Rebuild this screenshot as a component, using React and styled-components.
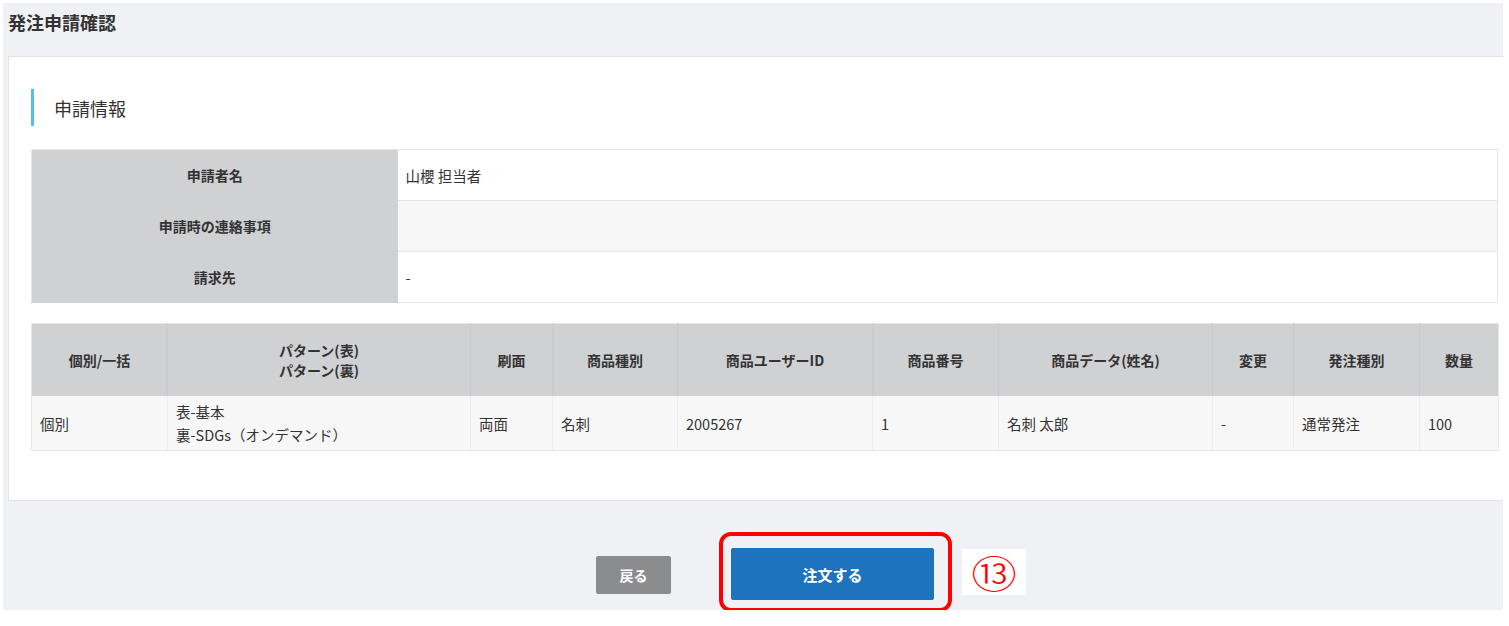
import React from 'react'
import styled, { createGlobalStyle } from 'styled-components'

const GlobalStyle = createGlobalStyle`
    html, body {
        margin: 0;
        padding: 0;
        background: #ffffff;
    }
    body {
        font-family: "Noto Sans CJK JP", "Noto Sans", sans-serif;
        color: #333333;
    }
`;

const Screen = styled.div`
    margin: 3px 6px 0 3px;
    height: 607px;
    background: #f0f1f5;
    display: flex;
    flex-direction: column;
`;

const PageTitle = styled.h1`
    margin: 0;
    height: 53px;
    flex-shrink: 0;
    box-sizing: border-box;
    padding: 7px 0 0 5px;
    font-size: 18px;
    line-height: 24px;
    font-weight: 700;
    color: #333333;
`;

const Card = styled.section`
    margin-left: 5px;
    height: 445px;
    flex-shrink: 0;
    box-sizing: border-box;
    background: #ffffff;
    border: 1px solid #e2e3e6;
    border-right: none;
    padding: 32px 5px 0 22px;
`;

const SectionHead = styled.h2`
    margin: 0 0 23px;
    height: 37px;
    display: flex;
    align-items: center;
    border-left: 3px solid #4fc2e0;
    padding-left: 20px;
    font-size: 18px;
    font-weight: 400;
    color: #333333;
`;

const Table = styled.table`
    width: 1467px;
    table-layout: fixed;
    border-collapse: collapse;
    margin-bottom: ${props => props.$gap || 0}px;
    font-size: 14.5px;
    border: 1px solid #e6e6e6;
`;

const LabelCell = styled.th`
    background: #d0d1d3;
    height: 50px;
    padding: 0 8px;
    text-align: center;
    font-weight: 700;
    font-size: 14px;
    border-bottom: 1px solid #d0d1d3;
`;

const ValueCell = styled.td`
    background: ${props => props.$striped ? '#f7f7f7' : '#ffffff'};
    height: 50px;
    padding: 0 8px;
    border-bottom: 1px solid #e6e6e6;
`;

const HeadCell = styled.th`
    background: #d0d1d3;
    height: 72px;
    padding: 0 8px;
    text-align: center;
    font-weight: 700;
    font-size: 14px;
    line-height: 20px;
    border-right: 1px solid #c9cacd;
    &:last-child {
        border-right: none;
    }
`;

const BodyCell = styled.td`
    background: #f7f7f7;
    height: 54px;
    padding: 0 8px;
    line-height: 23px;
    border-right: 1px solid #ececec;
    border-bottom: 1px solid #e6e6e6;
    &:last-child {
        border-right: none;
    }
`;

const ButtonBar = styled.div`
    height: 109px;
    flex-shrink: 0;
    box-sizing: border-box;
    padding: 47px 0 0 24px;
    display: flex;
    justify-content: center;
    align-items: flex-start;
    gap: 60px;
`;

const BackButton = styled.button`
    margin-top: 8px;
    width: 75px;
    height: 38px;
    border: none;
    border-radius: 2px;
    background: #8a8c8e;
    color: #ffffff;
    font-family: inherit;
    font-size: 14px;
    font-weight: 700;
`;

const OrderWrap = styled.div`
    position: relative;
`;

const OrderButton = styled.button`
    display: block;
    width: 203px;
    height: 52px;
    border: none;
    border-radius: 2px;
    background: #1e73be;
    color: #ffffff;
    font-family: inherit;
    font-size: 15px;
    font-weight: 700;
`;

const Highlight = styled.div`
    position: absolute;
    left: -12px;
    right: -18px;
    top: -16px;
    bottom: -12px;
    border: 4px solid #ff0000;
    border-radius: 12px;
    pointer-events: none;
`;

const StepBadge = styled.div`
    position: absolute;
    left: 231px;
    top: 1px;
    width: 64px;
    height: 46px;
    background: #ffffff;
    display: flex;
    align-items: center;
    justify-content: center;
    color: #ff0000;
    font-size: 38px;
    font-weight: 300;
    line-height: 1;
    & span {
        display: inline-block;
        transform: scaleX(1.2);
    }
`;

const applicant = [
    { label: '申請者名', value: '山櫻 担当者' },
    { label: '申請時の連絡事項', value: '' },
    { label: '請求先', value: '-' },
]

const columns = [
    { title: '個別/一括', width: 136 },
    { title: ['パターン(表)', 'パターン(裏)'], width: 303 },
    { title: '刷面', width: 82 },
    { title: '商品種別', width: 125 },
    { title: '商品ユーザーID', width: 195 },
    { title: '商品番号', width: 126 },
    { title: '商品データ(姓名)', width: 214 },
    { title: '変更', width: 81 },
    { title: '発注種別', width: 126 },
    { title: '数量', width: 79 },
]

const orderRow = ['個別', ['表-基本', '裏-SDGs（オンデマンド）'], '両面', '名刺', '2005267', '1', '名刺 太郎', '-', '通常発注', '100']

const lines = (v) => Array.isArray(v)
    ? v.map((t, i) => <React.Fragment key={i}>{i > 0 && <br />}{t}</React.Fragment>)
    : v

const App = () => {
    return (
        <>
            <GlobalStyle />
            <Screen>
                <PageTitle>発注申請確認</PageTitle>

                <Card>
                    <SectionHead>申請情報</SectionHead>

                    <Table $gap={20}>
                        <colgroup>
                            <col style={{ width: 366 }} />
                            <col />
                        </colgroup>
                        <tbody>
                            {applicant.map((row, i) => (
                                <tr key={row.label}>
                                    <LabelCell>{row.label}</LabelCell>
                                    <ValueCell $striped={i === 1}>{row.value}</ValueCell>
                                </tr>
                            ))}
                        </tbody>
                    </Table>

                    <Table>
                        <colgroup>
                            {columns.map((c, i) => <col key={i} style={{ width: c.width }} />)}
                        </colgroup>
                        <thead>
                            <tr>
                                {columns.map((c, i) => <HeadCell key={i}>{lines(c.title)}</HeadCell>)}
                            </tr>
                        </thead>
                        <tbody>
                            <tr>
                                {orderRow.map((v, i) => <BodyCell key={i}>{lines(v)}</BodyCell>)}
                            </tr>
                        </tbody>
                    </Table>
                </Card>

                <ButtonBar>
                    <BackButton>戻る</BackButton>
                    <OrderWrap>
                        <OrderButton>注文する</OrderButton>
                        <Highlight />
                        <StepBadge><span>⑬</span></StepBadge>
                    </OrderWrap>
                </ButtonBar>
            </Screen>
        </>
    )
}

export default App
